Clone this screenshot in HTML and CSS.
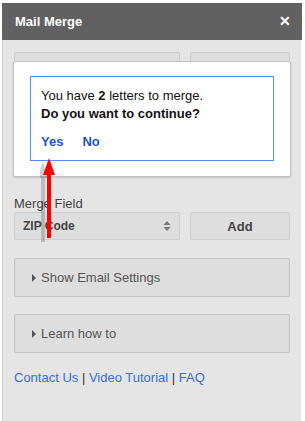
FILE: index.html
```html
<!DOCTYPE html>
<html>
<head>
<meta charset="utf-8">
<link rel="stylesheet" href="styles.css">
</head>
<body>
<div class="frame">
  <div class="header">
    <span class="title">Mail Merge</span>
    <span class="close">&#x2715;</span>
  </div>
  <div class="panel">
    <div class="row top-row">
      <div class="box box-wide"></div>
      <div class="box box-narrow"></div>
    </div>
    <div class="label">Merge Field</div>
    <div class="row">
      <div class="select box-wide">
        <span>ZIP Code</span>
        <svg class="updown" width="8" height="12" viewBox="0 0 8 12"><path d="M4 1 L7.5 5 H0.5 Z M4 11 L7.5 7 H0.5 Z" fill="#777"/></svg>
      </div>
      <div class="btn box-narrow">Add</div>
    </div>
    <div class="section first"><span class="tri"></span>Show Email Settings</div>
    <div class="section"><span class="tri"></span>Learn how to</div>
    <div class="links"><a>Contact Us</a> | <a>Video Tutorial</a> | <a>FAQ</a></div>
  </div>
  <div class="modal">
    <div class="dialog">
      <div class="line">You have <b>2</b> letters to merge.</div>
      <div class="line"><b>Do you want to continue?</b></div>
      <div class="actions"><span class="act">Yes</span><span class="act">No</span></div>
    </div>
  </div>
  <svg class="arrow" width="20" height="90" viewBox="0 0 20 90">
    <path d="M5 2 L11 18 H7 V82 H3 V18 H-1 Z" fill="rgba(0,0,0,0.18)" transform="translate(-2,2)"/>
    <path d="M9 0 L15 17 H11 V80 H7 V17 H3 Z" fill="#ff0000"/>
  </svg>
</div>
</body>
</html>
```
FILE: styles.css
```css
html, body {
  margin: 0;
  padding: 0;
  background: #fff;
}
body {
  font-family: "Liberation Sans", Arial, sans-serif;
  font-size: 13px;
  color: #333;
}
.frame {
  position: relative;
  margin: 3px 0 0 2px;
  width: 300px;
  height: 418px;
  display: flex;
  flex-direction: column;
}
.header {
  height: 37px;
  background: #616161;
  display: flex;
  align-items: center;
  justify-content: space-between;
  padding: 0 11px 0 13px;
  flex: none;
}
.title {
  color: #fff;
  font-weight: bold;
  font-size: 13px;
  margin-top: -1px;
}
.close {
  color: #fff;
  font-weight: bold;
  font-size: 14px;
  margin-top: -1px;
}
.panel {
  flex: 1;
  width: 276px;
  background: #e5e5e5;
  border-left: 1px solid #cfcfcf;
  padding: 12px 11px 0 11px;
}
.row {
  display: flex;
  gap: 10px;
}
.box-wide { width: 166px; }
.box-narrow { width: 100px; }
.box {
  background: #dedede;
  border: 1px solid #cacaca;
  border-radius: 2px;
  box-sizing: border-box;
  height: 125px;
}
.label {
  margin-top: 18px;
  line-height: 17px;
  font-size: 13px;
  color: #444;
}
.select, .btn {
  height: 28px;
  background: #dedede;
  border: 1px solid #cfcfcf;
  border-radius: 2px;
  display: flex;
  align-items: center;
  font-weight: bold;
  font-size: 12px;
  color: #444;
  box-sizing: border-box;
}
.select {
  justify-content: space-between;
  padding: 0 8px 0 8px;
}
.btn {
  justify-content: center;
  font-size: 13px;
}
.section {
  margin-top: 17px;
  height: 39px;
  box-sizing: border-box;
  background: #dedede;
  border: 1px solid #c6c6c6;
  border-radius: 2px;
  display: flex;
  align-items: center;
  padding-left: 17px;
  color: #555;
  font-size: 13px;
}
.section.first {
  margin-top: 18px;
}
.tri {
  width: 0;
  height: 0;
  border-top: 4px solid transparent;
  border-bottom: 4px solid transparent;
  border-left: 4px solid #555;
  margin-right: 5px;
}
.links {
  margin-top: 16px;
  line-height: 17px;
  color: #333;
  font-size: 13px;
}
.links a {
  color: #3a6fd0;
}
.modal {
  position: absolute;
  left: 11px;
  top: 58px;
  width: 260px;
  height: 100px;
  background: #fff;
  border: 1px solid #c4c4c4;
  border-radius: 2px;
  box-shadow: 0 1px 2px rgba(0,0,0,0.15);
  padding: 14px 0 0 16px;
  box-sizing: content-box;
}
.dialog {
  width: 222px;
  height: 83px;
  border: 1px solid #4d90fe;
  padding: 0 10px;
  color: #111;
}
.line {
  font-size: 13px;
  line-height: 18px;
}
.line:first-child {
  margin-top: 10px;
}
.actions {
  margin-top: 11px;
  display: flex;
  gap: 19px;
}
.act {
  color: #1a55c9;
  font-weight: bold;
  font-size: 13px;
}
.arrow {
  position: absolute;
  left: 38px;
  top: 155px;
}
```
